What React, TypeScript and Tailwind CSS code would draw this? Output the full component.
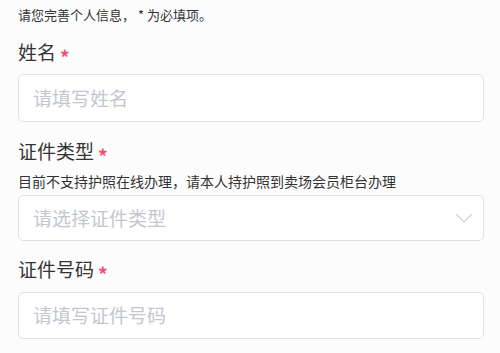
import { ReactNode } from "react";

const font = { fontFamily: '"Noto Sans CJK SC", "Noto Sans", sans-serif' };

function Label({ children, className = "" }: { children: ReactNode; className?: string }) {
  return (
    <div className={`flex items-center text-[19px] leading-[28px] text-[#333333] ${className}`}>
      <span>{children}</span>
      <span className="ml-[4px] translate-y-[4px] text-[19px] leading-none font-bold text-[#f0506e]">*</span>
    </div>
  );
}

function Field({ placeholder, className = "", select = false }: { placeholder: string; className?: string; select?: boolean }) {
  return (
    <div
      className={`flex items-center justify-between rounded-[5px] border border-[#dfe2ea] bg-white pl-[14px] pr-[10px] ${className}`}
    >
      <span className="text-[19px] text-[#c3c6cf]">{placeholder}</span>
      {select && (
        <svg width="18" height="10" viewBox="0 0 18 10" fill="none">
          <path d="M1 1 L9 9 L17 1" stroke="#cfd2d9" strokeWidth="1.2" />
        </svg>
      )}
    </div>
  );
}

export default function App() {
  return (
    <div className="h-[353px] w-[500px] overflow-hidden bg-[#fcfcfc] pl-[18px] pr-[16px]" style={font}>
      <p className="pt-[5px] text-[13px] leading-[20px] text-[#333333]">请您完善个人信息， * 为必填项。</p>

      <Label className="mt-[13px]">姓名</Label>
      <Field placeholder="请填写姓名" className="mt-[8px] h-[48px]" />

      <Label className="mt-[15px]">证件类型</Label>
      <p className="mt-[6px] text-[14px] leading-[20px] text-[#333333]">
        目前不支持护照在线办理，请本人持护照到卖场会员柜台办理
      </p>
      <Field placeholder="请选择证件类型" className="mt-[4px] h-[46px]" select />

      <Label className="mt-[14px]">证件号码</Label>
      <Field placeholder="请填写证件号码" className="mt-[9px] h-[47px]" />
    </div>
  );
}
